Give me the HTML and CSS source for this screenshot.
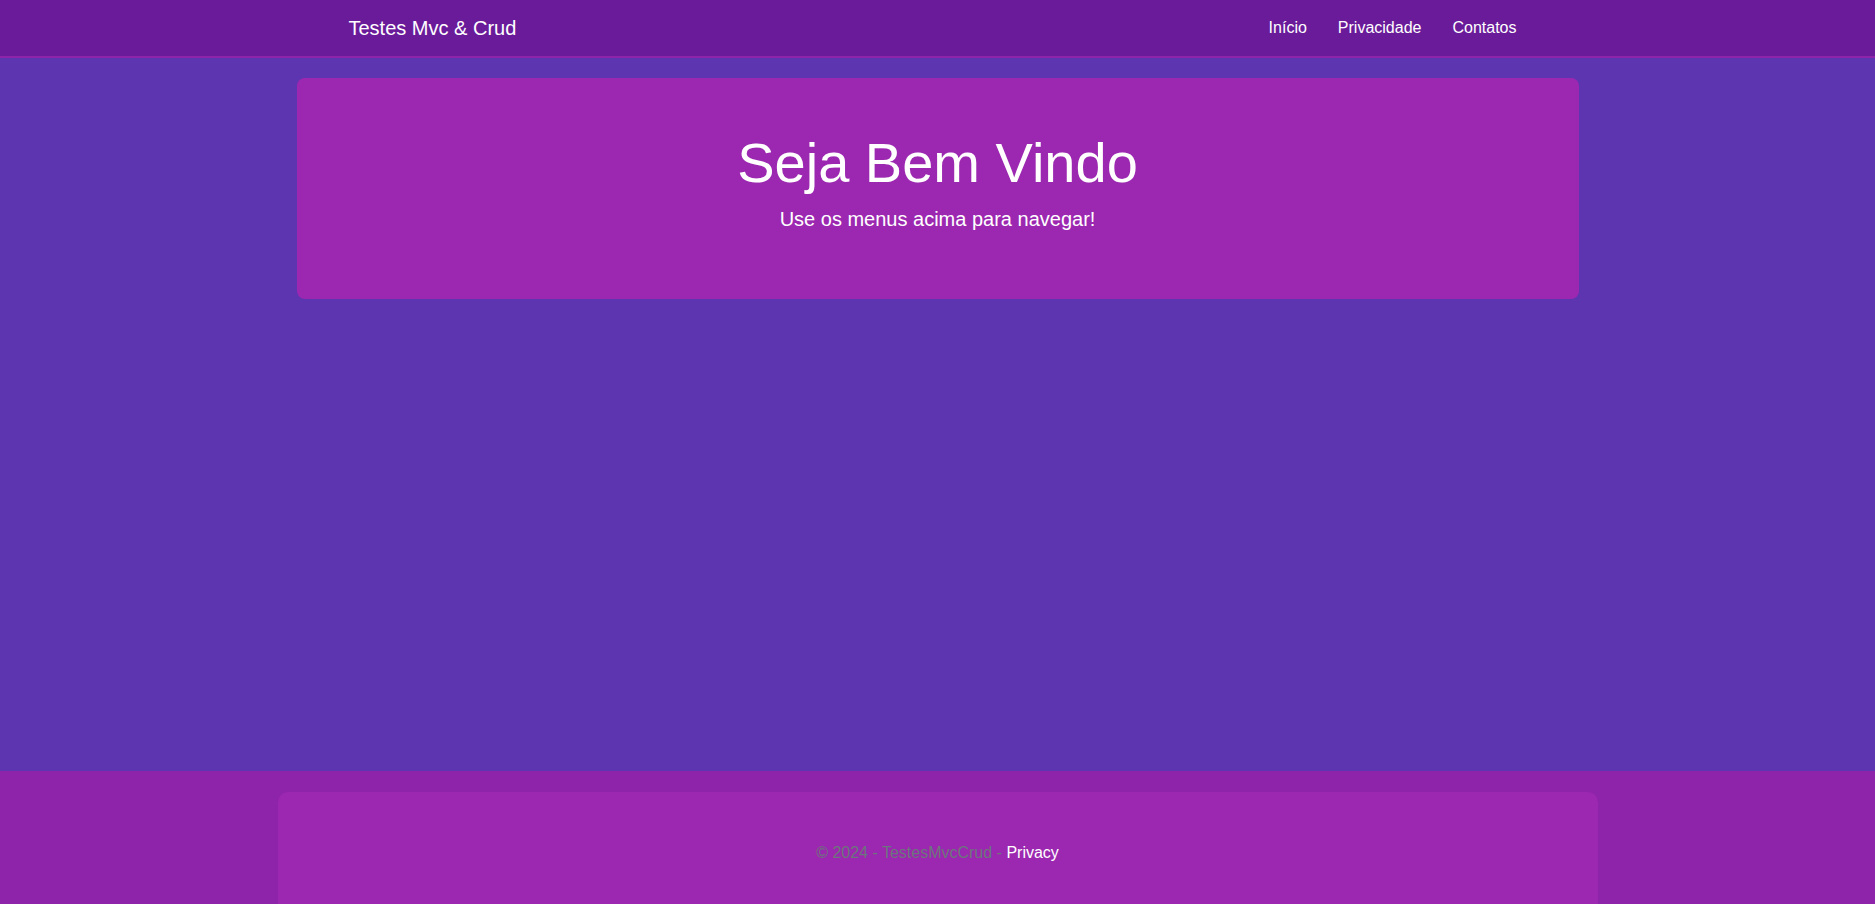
FILE: index.html
```html
<!DOCTYPE html>
<html lang="pt-BR">
<head>
<meta charset="utf-8">
<title>Testes Mvc &amp; Crud</title>
<link rel="stylesheet" href="styles.css">
</head>
<body>
<header class="navbar">
  <div class="nav-container">
    <a class="brand" href="#">Testes Mvc &amp; Crud</a>
    <nav class="nav-links">
      <a class="nav-link" href="#">Início</a>
      <a class="nav-link" href="#">Privacidade</a>
      <a class="nav-link" href="#">Contatos</a>
    </nav>
  </div>
</header>
<main class="main">
  <section class="hero">
    <h1 class="hero-title">Seja Bem Vindo</h1>
    <p class="hero-lead">Use os menus acima para navegar!</p>
  </section>
</main>
<footer class="footer">
  <div class="footer-card">
    <span class="muted">© 2024 - TestesMvcCrud - </span><a class="footer-link" href="#">Privacy</a>
  </div>
</footer>
</body>
</html>
```
FILE: styles.css
```css
* { box-sizing: border-box; }
html, body { height: 100%; }
body {
  margin: 0;
  height: 100vh;
  overflow: hidden;
  display: flex;
  flex-direction: column;
  background: #5e35b1;
  color: #fff;
  font-family: "Liberation Sans", Arial, sans-serif;
  font-size: 16px;
  line-height: 1.5;
}
a { text-decoration: none; color: #fff; }

.navbar {
  background: #6a1b9a;
  height: 58px;
  border-bottom: 2px solid #8e24aa;
  flex: 0 0 auto;
}
.nav-container {
  width: 1180px;
  margin: 0 auto;
  height: 56px;
  display: flex;
  align-items: center;
  justify-content: space-between;
}
.brand {
  font-size: 20px;
  line-height: 30px;
  margin-left: 1px;
}
.nav-links {
  display: flex;
  gap: 15px;
  margin-right: 3px;
  margin-top: -1px;
}
.nav-link {
  padding: 8px;
  font-size: 16px;
  line-height: 24px;
}

.main {
  flex: 1 1 auto;
  padding-top: 20px;
}
.hero {
  width: 1282px;
  margin: 0 auto;
  background: #9c27b0;
  border-radius: 8px;
  padding: 51px 0 49px;
  text-align: center;
}
.hero-title {
  margin: 0 0 8px;
  font-size: 56px;
  font-weight: 400;
  line-height: 1.2;
}
.hero-lead {
  margin: 0 0 16px;
  font-size: 20px;
  line-height: 30px;
}

.footer {
  flex: 0 0 133px;
  background: #8e24aa;
  padding-top: 21px;
  display: flex;
  flex-direction: column;
}
.footer-card {
  flex: 1;
  width: 1320px;
  margin: 0 auto;
  background: #9c27b0;
  border-radius: 10px 10px 0 0;
  padding-top: 49px;
  text-align: center;
  line-height: 24px;
  white-space: nowrap;
}
.muted { color: #6c757d; }
.footer-link { color: #fff; }
```
